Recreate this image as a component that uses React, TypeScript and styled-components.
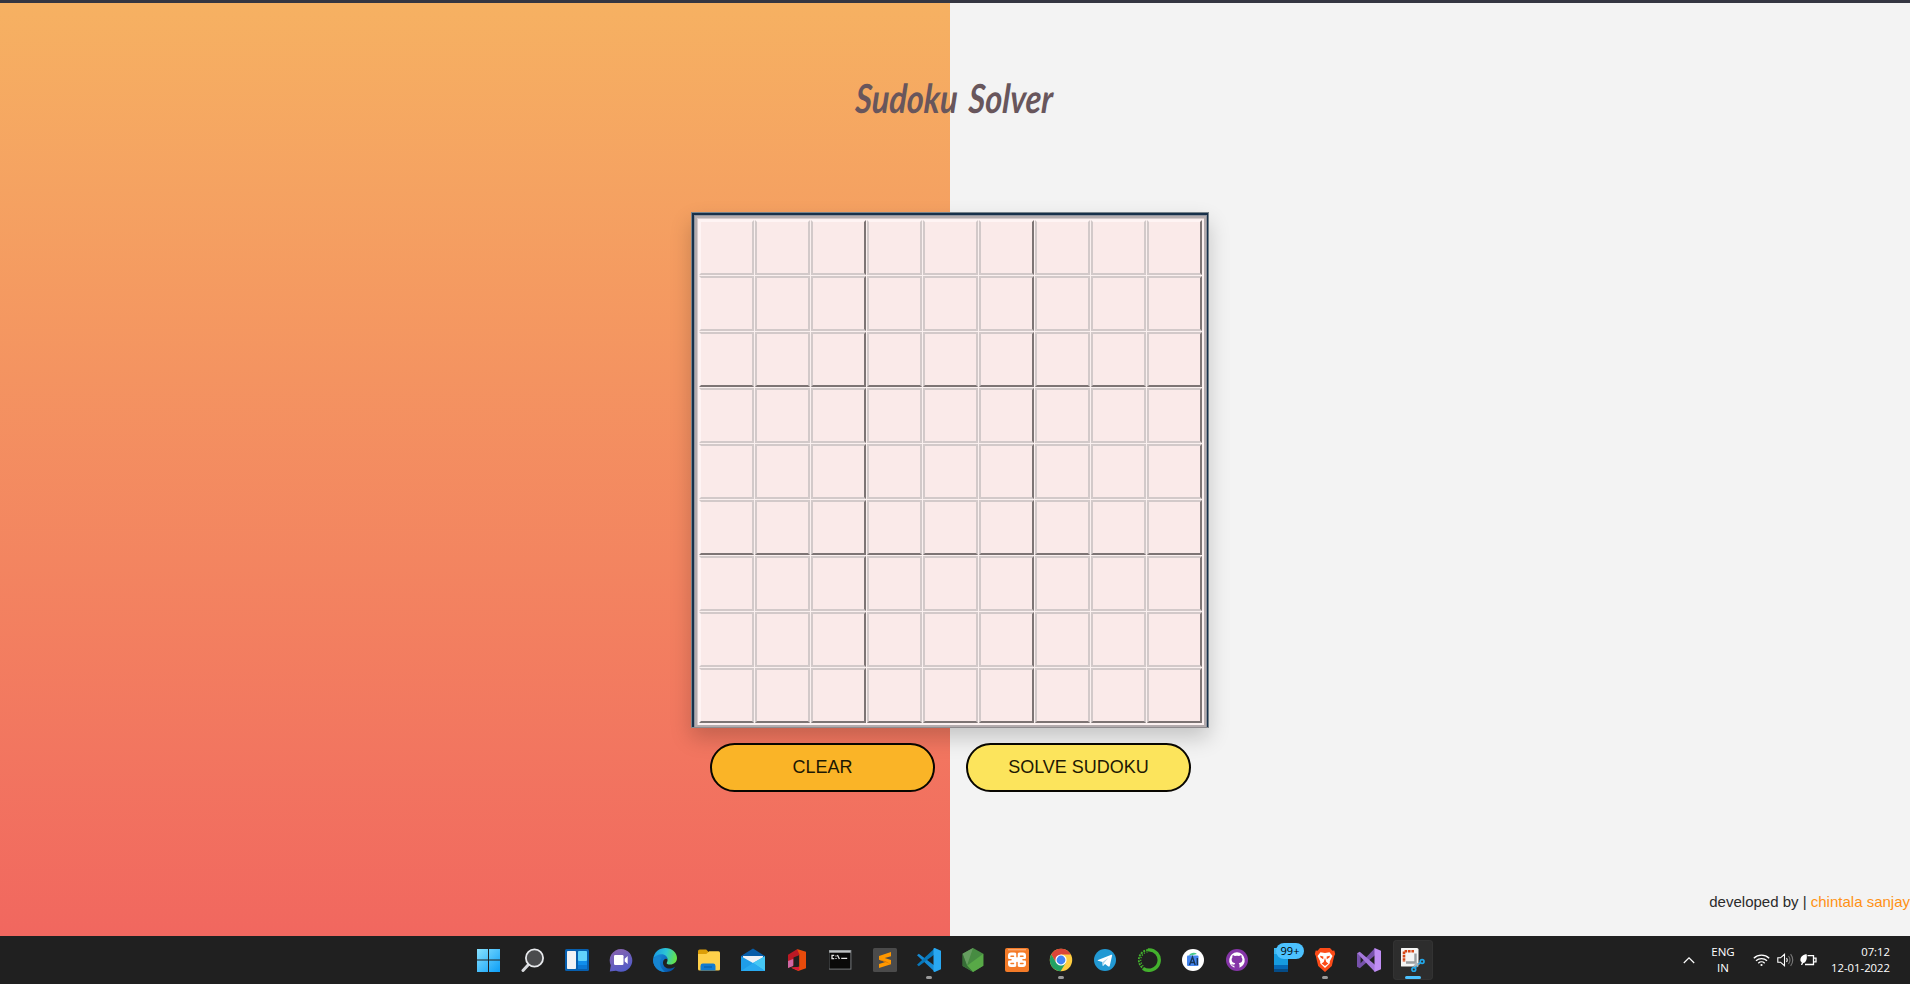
import React from "react";
import styled, { createGlobalStyle, css } from "styled-components";

const GlobalStyle = createGlobalStyle`
  * { box-sizing: border-box; }
  html, body { margin: 0; padding: 0; overflow: hidden; background: #f3f3f3; }
  body { font-family: "Liberation Sans", Arial, sans-serif; }
`;

const Screen = styled.div`
  width: 1910px;
  height: 984px;
  display: flex;
  flex-direction: column;
`;

const WindowEdge = styled.div`
  flex: 0 0 3px;
  background: #343641;
`;

const Page = styled.main`
  flex: 1;
  display: flex;
  flex-direction: column;
  background: linear-gradient(to bottom, #f6b162, #f1675f) 0 0 / 950px 100% no-repeat #f3f3f3;
`;

const Header = styled.header`
  height: 209px;
  padding: 71px 6px 0 0;
  display: flex;
  justify-content: center;
`;

const Title = styled.h1`
  margin: 0;
  font: italic 700 40px/48px Lato, "Open Sans", sans-serif;
  color: #68565c;
  white-space: nowrap;
  word-spacing: 5px;
  transform: scaleX(0.81) skewX(-4deg);
`;

const Solver = styled.section`
  width: 518px;
  margin-left: 691px;
  display: flex;
  flex-direction: column;
`;

const Frame = styled.div`
  border: solid #77838b;
  border-width: 1px;
  border-bottom-color: #8e8b8e;
  box-shadow: 0 10px 20px rgba(0, 0, 0, 0.19);
`;

const NavyEdge = styled.div`
  border: solid #17304a;
  border-width: 2px 1px 0 2px;
`;

const SteelEdge = styled.div`
  border: solid #8f939d;
  border-width: 1px 1px 0 1px;
`;

const GreyEdge = styled.div`
  border: 2px solid #b4acae;
`;

const PaleEdge = styled.div`
  border: solid #d6cccd;
  border-width: 1px 0 0 1px;
  background: #fdf1f1;
  padding: 1px;
`;

const Grid = styled.div`
  display: grid;
  grid-template-columns: repeat(9, 56px);
  grid-template-rows: repeat(9, 56px);
  background: #faf0ef;
`;

const Cell = styled.div<{ $row: number; $col: number }>`
  margin: 0 1px 1px 0;
  background: #faeae9;
  border: 2px solid #d2c9c9;
  ${(p) => p.$row === 0 && css`border-top-color: #fef4f4;`}
  ${(p) => p.$col === 0 && css`border-left-color: #fef4f4;`}
  ${(p) => p.$row % 3 === 2 && css`border-bottom-color: #7d7474;`}
  ${(p) => p.$col % 3 === 2 && css`border-right-color: #7d7474;`}
`;

const Actions = styled.div`
  display: flex;
  gap: 31px;
  padding: 15px 0 0 19px;
`;

const ActionButton = styled.button<{ $fill: string }>`
  position: relative;
  width: 225px;
  height: 49px;
  padding: 0 0 1px;
  border: 2px solid #080600;
  border-radius: 25px;
  background: ${(p) => p.$fill};
  color: #1d1803;
  font: 18px "Liberation Sans", Arial, sans-serif;
`;

const Credit = styled.footer`
  margin-top: auto;
  height: 45px;
  text-align: right;
  font-size: 15px;
  line-height: 22px;
  color: #2b2b2b;
`;

const Author = styled.span`
  color: #ff9114;
`;

const Taskbar = styled.nav`
  flex: 0 0 48px;
  display: flex;
  justify-content: space-between;
  background: #202020;
  padding: 4px 20px 4px 469px;
  color: #fff;
  font: 12px/16px "Open Sans", "Noto Sans", sans-serif;
`;

const Apps = styled.div`
  display: flex;
  gap: 4px;
`;

const Slot = styled.div<{ $active?: boolean; $open?: boolean }>`
  position: relative;
  width: 40px;
  height: 40px;
  display: flex;
  align-items: center;
  justify-content: center;
  border-radius: 4px;
  ${(p) => p.$active && css`background: #2d2d2d; box-shadow: inset 0 0 0 1px #333;`}
  ${(p) => (p.$open || p.$active) && css`
    &::after {
      content: "";
      position: absolute;
      bottom: 1px;
      left: 50%;
      width: ${p.$active ? 16 : 6}px;
      height: 3px;
      transform: translateX(-50%);
      border-radius: 2px;
      background: ${p.$active ? "#4cc2ff" : "#9a9a9a"};
    }
  `}
  svg { display: block; }
`;

const Badge = styled.span`
  position: absolute;
  left: 15px;
  top: 3px;
  width: 28px;
  height: 16px;
  border-radius: 8px;
  background: #4cc2ff;
  color: #000;
  font-size: 11px;
  line-height: 16px;
  text-align: center;
`;

const Tray = styled.div`
  display: flex;
  align-items: center;
`;

const Language = styled.div`
  width: 34px;
  margin: 0 13px 0 11px;
  text-align: center;
  font-size: 11.5px;
`;

const Status = styled.div`
  display: flex;
  gap: 6.5px;
  align-items: center;
`;

const Clock = styled.div`
  width: 66px;
  margin-left: 7px;
  text-align: right;
  font-size: 11.3px;
  white-space: nowrap;
`;

const Icon = ({ children, size = 24 }: { children: React.ReactNode; size?: number }) => (
  <svg width={size} height={size} viewBox="0 0 24 24" fill="none">{children}</svg>
);

type App = { id: string; art: React.ReactNode; open?: boolean; active?: boolean; badge?: string };

const apps: App[] = [
  { id: "start", art: <>
    <defs><linearGradient id="win" x1="0" y1="0" x2="24" y2="24" gradientUnits="userSpaceOnUse"><stop stopColor="#8be3ff" /><stop offset="1" stopColor="#089cf7" /></linearGradient></defs>
    <path d="M0 1H11v10.6H0zM12 1h11v10.6H12zM0 12.6H11V24H0zM12 12.6h11V24H12z" fill="url(#win)" /></> },
  { id: "search", art: <>
    <path d="m7.5 16.5-5.5 6" stroke="#d7d9dc" strokeWidth="3" strokeLinecap="round" />
    <circle cx="13.5" cy="10" r="8.6" fill="#4a4b4d" stroke="#e8eaed" strokeWidth="1.8" /></> },
  { id: "widgets", art: <>
    <rect y="1" width="24" height="22" rx="1.5" fill="#075fae" />
    <rect x="2" y="3" width="9" height="18" rx=".8" fill="#f1f2f4" />
    <rect x="13" y="3" width="9" height="10" rx=".8" fill="#62d2fb" />
    <path d="M13 13h9v4h-9z" fill="#108eec" /><path d="M13 17h9v4h-9z" fill="#0b78d4" /></> },
  { id: "chat", art: <>
    <defs><linearGradient id="chat" x1="4" y1="0" x2="15" y2="24" gradientUnits="userSpaceOnUse"><stop stopColor="#8b63ad" /><stop offset="1" stopColor="#505bc8" /></linearGradient></defs>
    <path d="M12 1a11.4 11.4 0 1 1-5 21.7L.8 23.5l1-6.2A11.4 11.4 0 0 1 12 1Z" fill="url(#chat)" />
    <rect x="5" y="7" width="9.5" height="10" rx="1.2" fill="#fff" /><path d="m15.7 10.8 3-2.7v8l-3-2.7z" fill="#fff" /></> },
  { id: "edge", art: <>
    <defs>
      <linearGradient id="edge1" x1="2" y1="4" x2="23" y2="10" gradientUnits="userSpaceOnUse"><stop stopColor="#1b9de2" /><stop offset=".5" stopColor="#2dc6d4" /><stop offset="1" stopColor="#65e348" /></linearGradient>
      <linearGradient id="edge2" x1="2" y1="10" x2="17" y2="22" gradientUnits="userSpaceOnUse"><stop stopColor="#1686d8" /><stop offset="1" stopColor="#0756a8" /></linearGradient>
    </defs>
    <path d="M.2 11C1 3.7 6.5 0 12.3 0 19 0 24 4.8 24 10c0 4.2-3.2 6.5-6.7 6.5-2.6 0-4.3-1-3.4-2.1 2-2.7-.5-6.6-4.4-6.6C5 7.8 2 8.4.2 11Z" fill="url(#edge1)" />
    <path d="M.2 11C1.6 7.7 5 6.2 8.5 6.2c4 0 6.4 2.9 6.2 5.8-.9-2.2-4.5-1.2-4.7 2.4-.2 3.8 3.2 6.5 7.2 6.1 2.2-.2 4-1.1 5-2C20 23.1 15.8 24 12 24 5.1 24-.6 17.9.2 11Z" fill="url(#edge2)" />
    <path d="M8.3 10.2c-2.6 3-1.8 9.6 3.7 13.8C5.1 24-.6 17.9.2 11c2-3.5 6-3.3 8.1-.8Z" fill="#1685d1" /></> },
  { id: "files", art: <g transform="translate(1 0)">
    <path d="M0 3.2Q0 1.5 1.7 1.5h6.5l3 3v5H0z" fill="#dc9e08" />
    <path d="M0 6h8.3l3-2.7h9.2Q22 3.3 22 5v16.2Q22 22.5 20.5 22.5h-19Q0 22.5 0 21z" fill="#ffd04a" />
    <path d="M2.5 22.5V18q0-2.4 2.4-2.4h10.2q2.4 0 2.4 2.4v4.5z" fill="#137bd1" /><path d="M6 19h8" stroke="#0860ac" strokeWidth="1.2" /></g> },
  { id: "mail", art: <>
    <path d="M0 8 12 .5 24 8v8H0z" fill="#075da8" /><path d="M2 8h20v8H2z" fill="#eef2f5" />
    <path d="M0 8.2 12 15l12-6.8V23H0z" fill="#1f9de9" /><path d="M24 8.2V23L12 15z" fill="#45c7f4" /><path d="m0 23 12-8 12 8z" fill="#29aaf0" /></> },
  { id: "office", art: <>
    <path d="M3 6.7 12 1.2l2 1.8v4.2l-5.5 2.3v7.8l-2 .9L3 20z" fill="#bb1924" /><path d="m3 13 5.2-2v7L3 20z" fill="#cf67a3" />
    <path d="m12 1 9 2.8v16.4L13.2 23l-7-3.3 8-1V6z" fill="#e84b0b" /><path d="m6.2 19.7 8-1v4z" fill="#d9173e" /></> },
  { id: "terminal", art: <g transform="translate(-.8 0)">
    <rect x=".7" y="2.5" width="22" height="18.6" fill="#090909" stroke="#777b7e" /><path d="M1 3.6h21.5" stroke="#bfc2c4" strokeWidth="2.2" />
    <path d="M6 7.4H3.8v3.3H6M7.8 7.6v.8m0 1.7v.8M9.2 7l2 4M13 10.3h6" stroke="#e4e4e4" strokeWidth="1.3" /></g> },
  { id: "sublime", art: <>
    <rect width="24" height="24" rx="1.5" fill="#4b4b4b" />
    <path d="m6 8 12-4v4.3L11.7 10 18 12v4.2L6 20v-4.1l6.5-2L6 11.8z" fill="#ff9800" /><path d="m6 11.8 12 4.4-5.6-3.2z" fill="#de7700" /></> },
  { id: "code", open: true, art: <>
    <path d="m0 7.3 1.8-1.5L20 19.5l-2 4.5z" fill="#168bd5" /><path d="m0 16.7 1.8 1.6L20 4.5 18 0z" fill="#0878bb" />
    <path d="m17.7 0 6.3 2.8v18.4L17.7 24l-1.2-.6V.6z" fill="#29a8f2" /></> },
  { id: "node", art: <>
    <path d="m12 0 10.3 5.8v12L12 24 1.6 18V5.8z" fill="#478c42" /><path d="M12 0 1.6 5.8 6 17.5z" fill="#669d60" /><path d="m22.3 5.8-16.3 12L12 24l10.3-6.2z" fill="#58a947" /><path d="M1.6 5.8v12L12 24 6 17.5z" fill="#366e36" /></> },
  { id: "xampp", art: <>
    <rect width="24" height="24" rx="2" fill="#f47b28" /><path d="M3 1.8h18" stroke="#ffb987" />
    <rect x="3" y="4.5" width="9.2" height="7.6" rx="3" fill="#fff" /><rect x="11.8" y="4.5" width="9.2" height="7.6" rx="3" fill="#fff" />
    <rect x="3" y="11.3" width="9.2" height="7.7" rx="3" fill="#fff" /><rect x="11.8" y="11.3" width="9.2" height="7.7" rx="3" fill="#fff" />
    <path d="M8 9.8h8v4.2H8z" fill="#fff" />
    <path d="M6 8.2h2.5M15.5 8.2H18M6 15.4h2.5M15.5 15.4H18M12 4v4.8M12 14.6V20M2 11.8h4M18 11.8h4" stroke="#f47b28" strokeWidth="1.5" strokeLinecap="round" /></> },
  { id: "chrome", open: true, art: <>
    <circle cx="12" cy="12" r="11.2" fill="#ffcd40" /><path d="M2.3 6.4A11.2 11.2 0 0 1 21.7 6.4H12L7.2 14.8z" fill="#db4638" />
    <path d="M2.3 6.4 7.2 14.8l4.8 2.8 4.8-2.8-5.2 8.4A11.2 11.2 0 0 1 2.3 6.4Z" fill="#22a164" />
    <circle cx="12" cy="12" r="5.6" fill="#fff" /><circle cx="12" cy="12" r="4.4" fill="#4285f4" /></> },
  { id: "telegram", art: <>
    <circle cx="12" cy="12" r="11" fill="#2299d3" /><path d="m5 12 13.3-5.2c.8-.3 1 .1.8.8l-2.3 10.2c-.2.9-.8 1-1.5.6l-3.2-2.4-1.8 1.8c-.3.3-.7 0-.7-.4l-.2-3.4L5 12.8c-.6-.2-.6-.6 0-.8Z" fill="#fff" /><path d="m9.5 14 6-4.3-4.3 5-.9 2.6z" fill="#add5ea" /></> },
  { id: "anaconda", art: <>
    <path d="M11 1.9A10.2 10.2 0 1 1 6 20.3" stroke="#43b12d" strokeWidth="3.4" />
    <path d="M11 1.9A10.2 10.2 0 0 0 6 20.3" stroke="#43b12d" strokeWidth="1.8" strokeDasharray="2 1" />
    <path d="M10.6 3.8A8.3 8.3 0 0 0 7 18.6" stroke="#43b12d" strokeWidth="1.3" strokeDasharray="1.2 1.6" /></> },
  { id: "studio", art: <>
    <circle cx="12" cy="12" r="11" fill="#fff" /><path d="M8 8a4.6 3.4 0 0 1 8-2z" fill="#4acb8c" /><rect x="6" y="7.5" width="11.5" height="10.5" rx="1" fill="#4385ef" /><path d="m8.5 17 3-8 2.7 8M9.5 14.5h4M16.3 10v7" stroke="#183557" strokeWidth="1.4" /></> },
  { id: "github", art: <>
    <circle cx="12" cy="12" r="11" fill="#8535a7" />
    <path d="M12 4.3a8 8 0 0 0-2.6 15.5v-2.1c-2 .4-2.7-.8-3.1-1.7 1.4.1 1.4 1 3.3.6.1-.6.4-1 .7-1.3-2.2-.3-3.7-1.2-3.7-3.7 0-1 .4-1.7.9-2.3-.2-.5-.2-1.2.1-2.1.9 0 1.7.5 2.2.9a8 8 0 0 1 4.4 0c.5-.4 1.3-.9 2.2-.9.3.9.3 1.6.1 2.1.5.6.9 1.4.9 2.3 0 2.5-1.5 3.4-3.7 3.7.5.5.8 1.1.8 2v2.5A8 8 0 0 0 12 4.3Z" fill="#fff" /></> },
  { id: "phone", badge: "99+", art: <>
    <path d="M5 0h14v6H5z" fill="#3cb6ef" /><path d="M5 6h14v11H5z" fill="#169bdf" /><path d="M5 17h14v4H5z" fill="#0568b5" /><path d="M5 21h14v3H5z" fill="#054c87" /></> },
  { id: "brave", open: true, art: <>
    <path d="m7 0h10l2.5 2.7 1.8-.2L22.2 6l-1 2-2.4 10L12 24l-6.8-6L2.8 8l-1-2 .9-3.5 1.8.2z" fill="#fc4b18" />
    <path d="m7.5 4.3 4.5.6 4.5-.6 3 3.7-2.7 5.2v2L12 20l-4.8-4.8v-2L4.5 8z" fill="#fff" /><path d="m7 7.7 3.3.8v2.8L7.6 9.5zm10 0-3.3.8v2.8l2.7-1.8zM12 10l1.3 4 2.1 1.4L12 18l-3.4-2.6 2.1-1.4z" fill="#fc4b18" /></> },
  { id: "visualstudio", art: <>
    <path d="M0 5.2v13.6l2.8 1.4L20 5.5 18 0 3.6 15.3V8.7z" fill="#7651aa" /><path d="m0 5.2 2.8-1.4L20 18.5 18 24z" fill="#a578dc" /><path d="m17.5 0 6.5 2.7v18.6L17.5 24z" fill="#c08ef4" /></> },
  { id: "snip", active: true, art: <g transform="translate(-.5 0)">
    <rect y="0" width="18" height="18.5" rx="1.5" fill="#f5f5f4" /><path d="M13.5 3.2h-10V14" stroke="#d74716" strokeWidth="2.6" strokeDasharray="2.6 .8" />
    <path d="M5.5 14.5h9.5V5.5" stroke="#9b9fa1" strokeWidth="2.4" /><path d="m15 14.5 2 4.5M13.5 18l6-3" stroke="#aeb3b7" strokeWidth="2" />
    <circle cx="13.3" cy="21.5" r="1.9" stroke="#22a7e9" strokeWidth="1.7" /><circle cx="21.6" cy="13.6" r="1.9" stroke="#22a7e9" strokeWidth="1.7" /><path d="m14.5 20 2-2M20 14.8l-2.5 1.5" stroke="#22a7e9" strokeWidth="1.2" /></g> },
];

export default function App() {
  return (
    <Screen>
      <GlobalStyle />
      <WindowEdge />
      <Page>
        <Header><Title>Sudoku Solver</Title></Header>
        <Solver>
          <Frame><NavyEdge><SteelEdge><GreyEdge><PaleEdge>
            <Grid>
              {Array.from({ length: 81 }, (_, i) => (
                <Cell key={i} $row={Math.floor(i / 9)} $col={i % 9} />
              ))}
            </Grid>
          </PaleEdge></GreyEdge></SteelEdge></NavyEdge></Frame>
          <Actions>
            <ActionButton $fill="#fab427">CLEAR</ActionButton>
            <ActionButton $fill="#fce45c">SOLVE SUDOKU</ActionButton>
          </Actions>
        </Solver>
        <Credit>developed by | <Author>chintala sanjay</Author></Credit>
      </Page>
      <Taskbar>
        <Apps>
          {apps.map((a) => (
            <Slot key={a.id} $active={a.active} $open={a.open}>
              <Icon>{a.art}</Icon>
              {a.badge && <Badge>{a.badge}</Badge>}
            </Slot>
          ))}
        </Apps>
        <Tray>
          <svg width="12" height="8" viewBox="0 0 12 8" fill="none"><path d="m.8 7 5.2-5.2L11.2 7" stroke="#fff" strokeWidth="1.2" /></svg>
          <Language>ENG<br />IN</Language>
          <Status>
            <svg width="17" height="14" viewBox="0 0 17 14" fill="none" stroke="#fff" strokeWidth="1.3">
              <path d="M.8 5.2a11 11 0 0 1 15.4 0M3 7.8a7.8 7.8 0 0 1 11 0M5.3 10.2a4.6 4.6 0 0 1 6.4 0" /><circle cx="8.5" cy="12" r="1.1" fill="#fff" stroke="none" />
            </svg>
            <svg width="17" height="14" viewBox="0 0 17 14" fill="none" stroke="#fff" strokeWidth="1.1">
              <path d="M.8 4.8h2.7L7.5 1.3v11.4l-4-3.5H.8zM9.5 5q1.4 2 0 4" /><path d="M11.5 3q3 4 0 8M13.6 1.2q4.3 5.8 0 11.6" stroke="#777" />
            </svg>
            <svg width="17" height="14" viewBox="0 0 17 14" fill="none">
              <path d="M7.5 2.7h6v8.8H5M14 5.2h2v3.6h-2" stroke="#fff" strokeWidth="1.3" /><path d="M6.5 1C2 2 0 4.5.5 8l1.3 1.6L1 12h1.2l1-2C6.5 9.5 7.5 5 6.5 1Z" fill="#fff" />
            </svg>
          </Status>
          <Clock>07:12<br />12-01-2022</Clock>
        </Tray>
      </Taskbar>
    </Screen>
  );
}
